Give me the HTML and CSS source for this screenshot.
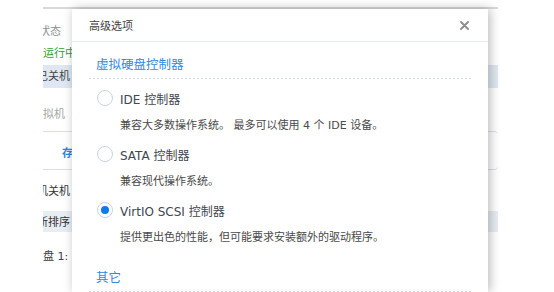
FILE: index.html
```html
<!DOCTYPE html>
<html lang="zh">
<head>
<meta charset="utf-8">
<title>高级选项</title>
<link rel="stylesheet" href="styles.css">
</head>
<body>
<div class="win">
  <div class="row r-head"><span class="cut4">状态</span></div>
  <div class="row r-run">运行中</div>
  <div class="row r-off sel"><span class="cut6">已关机</span></div>
  <div class="row r-vm"><span class="cut0">拟机</span></div>
  <div class="box"><span class="box-btn">存储</span></div>
  <div class="row r-stop"><span class="cut6">机关机</span></div>
  <div class="row r-sort sel2"><span class="cut6">新排序</span></div>
  <div class="row r-disk"><span class="cut0">盘 1:</span></div>
</div>

<div class="dlg">
  <div class="dlg-head">
    <span class="dlg-title">高级选项</span>
    <svg class="close" width="9" height="9" viewBox="0 0 9 9"><path d="M1 1 L8 8 M8 1 L1 8" stroke="#8c8c8c" stroke-width="1.8" stroke-linecap="round" fill="none"/></svg>
  </div>
  <div class="dlg-body">
    <div class="sec-title">虚拟硬盘控制器</div>
    <div class="options">
      <div class="opt">
        <div class="opt-label"><span class="radio"></span><span>IDE 控制器</span></div>
        <div class="opt-desc">兼容大多数操作系统。 最多可以使用 4 个 IDE 设备。</div>
      </div>
      <div class="opt">
        <div class="opt-label"><span class="radio"></span><span>SATA 控制器</span></div>
        <div class="opt-desc">兼容现代操作系统。</div>
      </div>
      <div class="opt">
        <div class="opt-label"><span class="radio on"></span><span>VirtIO SCSI 控制器</span></div>
        <div class="opt-desc">提供更出色的性能，但可能要求安装额外的驱动程序。</div>
      </div>
    </div>
    <div class="sec-title sec-other">其它</div>
  </div>
</div>
</body>
</html>
```
FILE: styles.css
```css
html, body {
  margin: 0;
  padding: 0;
  background: #fff;
  width: 554px;
  height: 292px;
  overflow: hidden;
  font-family: "DejaVu Sans", "Noto Sans CJK SC", sans-serif;
}

.win {
  margin: 7px 56px 0 43px;
  height: 285px;
  border-top: 2px solid #d9d9d9;
  overflow: hidden;
  font-size: 11px;
  color: #444;
  white-space: nowrap;
}

.row {
  height: 20px;
  line-height: 20px;
}

.cut4 { margin-left: -4px; }
.cut6 { margin-left: -6px; }
.cut0 { margin-left: 0; }

.r-head { margin-top: 13px; color: #8e8e8e; }
.r-run { margin-top: 1px; height: 22px; line-height: 22px; color: #2ea12e; }
.r-off { margin-top: 0; height: 23px; line-height: 24px; }
.sel { background: #dfe8f2; }
.r-vm { margin-top: 17px; color: #a6a6a6; }

.box {
  margin-top: 6px;
  height: 37px;
  border-top: 1px solid #d5e2ee;
  border-bottom: 1px solid #d5e2ee;
  border-radius: 0 4px 4px 0;
  padding-left: 19px;
  line-height: 44px;
  color: #2d86de;
  font-weight: bold;
}

.r-stop { margin-top: 12px; color: #333; }
.r-sort { margin-top: 9px; height: 21px; line-height: 23px; color: #333; }
.sel2 { background: #e7edf3; }
.r-disk { margin-top: 15px; color: #404040; }

.dlg {
  position: absolute;
  left: 72px;
  top: 9px;
  width: 416px;
  height: 283px;
  background: #fff;
  box-shadow: 2px 0 10px rgba(0, 0, 0, 0.28);
}

.dlg-head {
  height: 32px;
  padding: 0 19px 0 17px;
  display: flex;
  align-items: center;
  justify-content: space-between;
  border-bottom: 1px solid #e4ecf4;
}

.dlg-title {
  font-size: 11px;
  color: #3f3f3f;
}

.close { display: block; }

.dlg-body {
  padding: 13px 16px 0 17px;
}

.sec-title {
  padding: 0 0 4px 7px;
  height: 20px;
  line-height: 20px;
  font-size: 12.5px;
  color: #2f88e2;
  background: repeating-linear-gradient(to right, #c7dbee 0 2px, transparent 2px 4px) left bottom / 100% 1px no-repeat;
}

.sec-other { margin-top: 20px; }

.options {
  margin-top: 9px;
  padding-left: 8px;
}

.opt {
  margin-bottom: 8px;
}

.opt-label {
  display: flex;
  align-items: center;
  height: 20px;
  font-size: 12px;
  color: #40474f;
}

.radio {
  box-sizing: border-box;
  width: 16px;
  height: 16px;
  border: 1px solid #cad4df;
  border-radius: 50%;
  margin-right: 7px;
  background: #fff;
  position: relative;
}

.radio.on::after {
  content: "";
  position: absolute;
  left: 3px;
  top: 3px;
  width: 8px;
  height: 8px;
  border-radius: 50%;
  background: #0a7ced;
}

.opt-desc {
  margin-top: 8px;
  height: 20px;
  line-height: 20px;
  padding-left: 23px;
  font-size: 11px;
  color: #4a4a4a;
  white-space: nowrap;
}
```
